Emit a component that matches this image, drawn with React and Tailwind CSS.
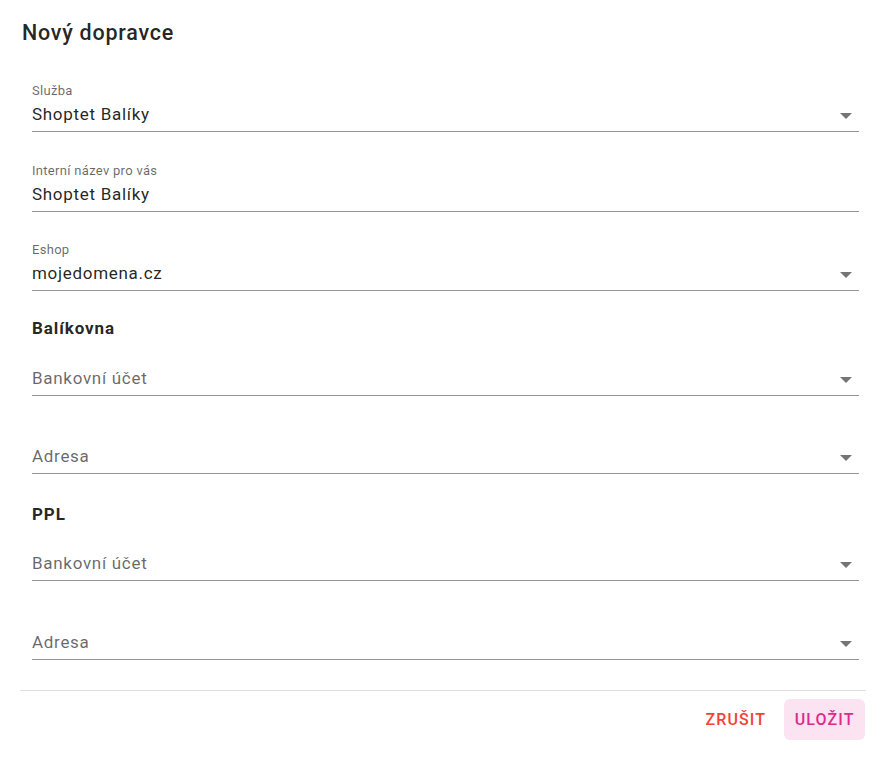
import React from "react";

function Arrow() {
  return (
    <svg width="12" height="6" viewBox="0 0 12 6" className="shrink-0 mt-[8.5px] mr-[7px]" fill="rgba(0,0,0,0.54)">
      <path d="M0 0L6 6L12 0z" />
    </svg>
  );
}

function Field({ label, value, select, className = "" }) {
  const shrunk = value !== undefined;
  return (
    <div className={"flex flex-col " + className}>
      <div className="h-[16px] text-[13px] leading-[14px] tracking-[0.3px] text-[rgba(0,0,0,0.6)]">
        {shrunk ? label : ""}
      </div>
      <div className="h-[32px] pt-[4px] border-b border-[rgba(0,0,0,0.42)] flex items-start">
        <div
          className={
            "flex-1 text-[17px] leading-[21px] tracking-[0.7px] " +
            (shrunk ? "text-[rgba(0,0,0,0.87)]" : "text-[rgba(0,0,0,0.6)]")
          }
        >
          {shrunk ? value : label}
        </div>
        {select && <Arrow />}
      </div>
    </div>
  );
}

export default function App() {
  return (
    <div
      className="w-[887px] h-[763px] bg-white flex flex-col"
      style={{ fontFamily: "Roboto, 'Noto Sans', sans-serif" }}
    >
      <div className="pt-[17px] pl-[22px] text-[21.5px] leading-[32px] tracking-[0.75px] font-medium text-[rgba(0,0,0,0.87)]">
        Nový dopravce
      </div>
      <div className="pl-[32px] pr-[28px] flex flex-col">
        <Field className="mt-[35px]" label="Služba" value="Shoptet Balíky" select />
        <Field className="mt-[32px]" label="Interní název pro vás" value="Shoptet Balíky" />
        <Field className="mt-[31px]" label="Eshop" value="mojedomena.cz" select />
        <div className="mt-[25px] h-[24px] text-[17px] leading-[24px] tracking-[0.9px] font-bold text-[rgba(0,0,0,0.87)]">
          Balíkovna
        </div>
        <Field className="mt-[8px]" label="Bankovní účet" select />
        <Field className="mt-[30px]" label="Adresa" select />
        <div className="mt-[28px] h-[24px] text-[17px] leading-[24px] tracking-[0.9px] font-bold text-[rgba(0,0,0,0.87)]">
          PPL
        </div>
        <Field className="mt-[7px]" label="Bankovní účet" select />
        <Field className="mt-[31px]" label="Adresa" select />
      </div>
      <div className="mt-[30px] ml-[20px] w-[846px] h-px bg-[rgba(0,0,0,0.12)]" />
      <div className="mt-[8px] pr-[22px] flex justify-end gap-[8px]">
        <button className="h-[41px] pl-[11px] pr-[10px] rounded-[6px] text-[16px] font-medium tracking-[0.07em] uppercase text-[#f44336]">
          Zrušit
        </button>
        <button className="h-[41px] px-[10.5px] rounded-[6px] text-[16px] font-medium tracking-[0.07em] uppercase text-[#db2b8b] bg-[#fbe3f1]">
          Uložit
        </button>
      </div>
    </div>
  );
}
